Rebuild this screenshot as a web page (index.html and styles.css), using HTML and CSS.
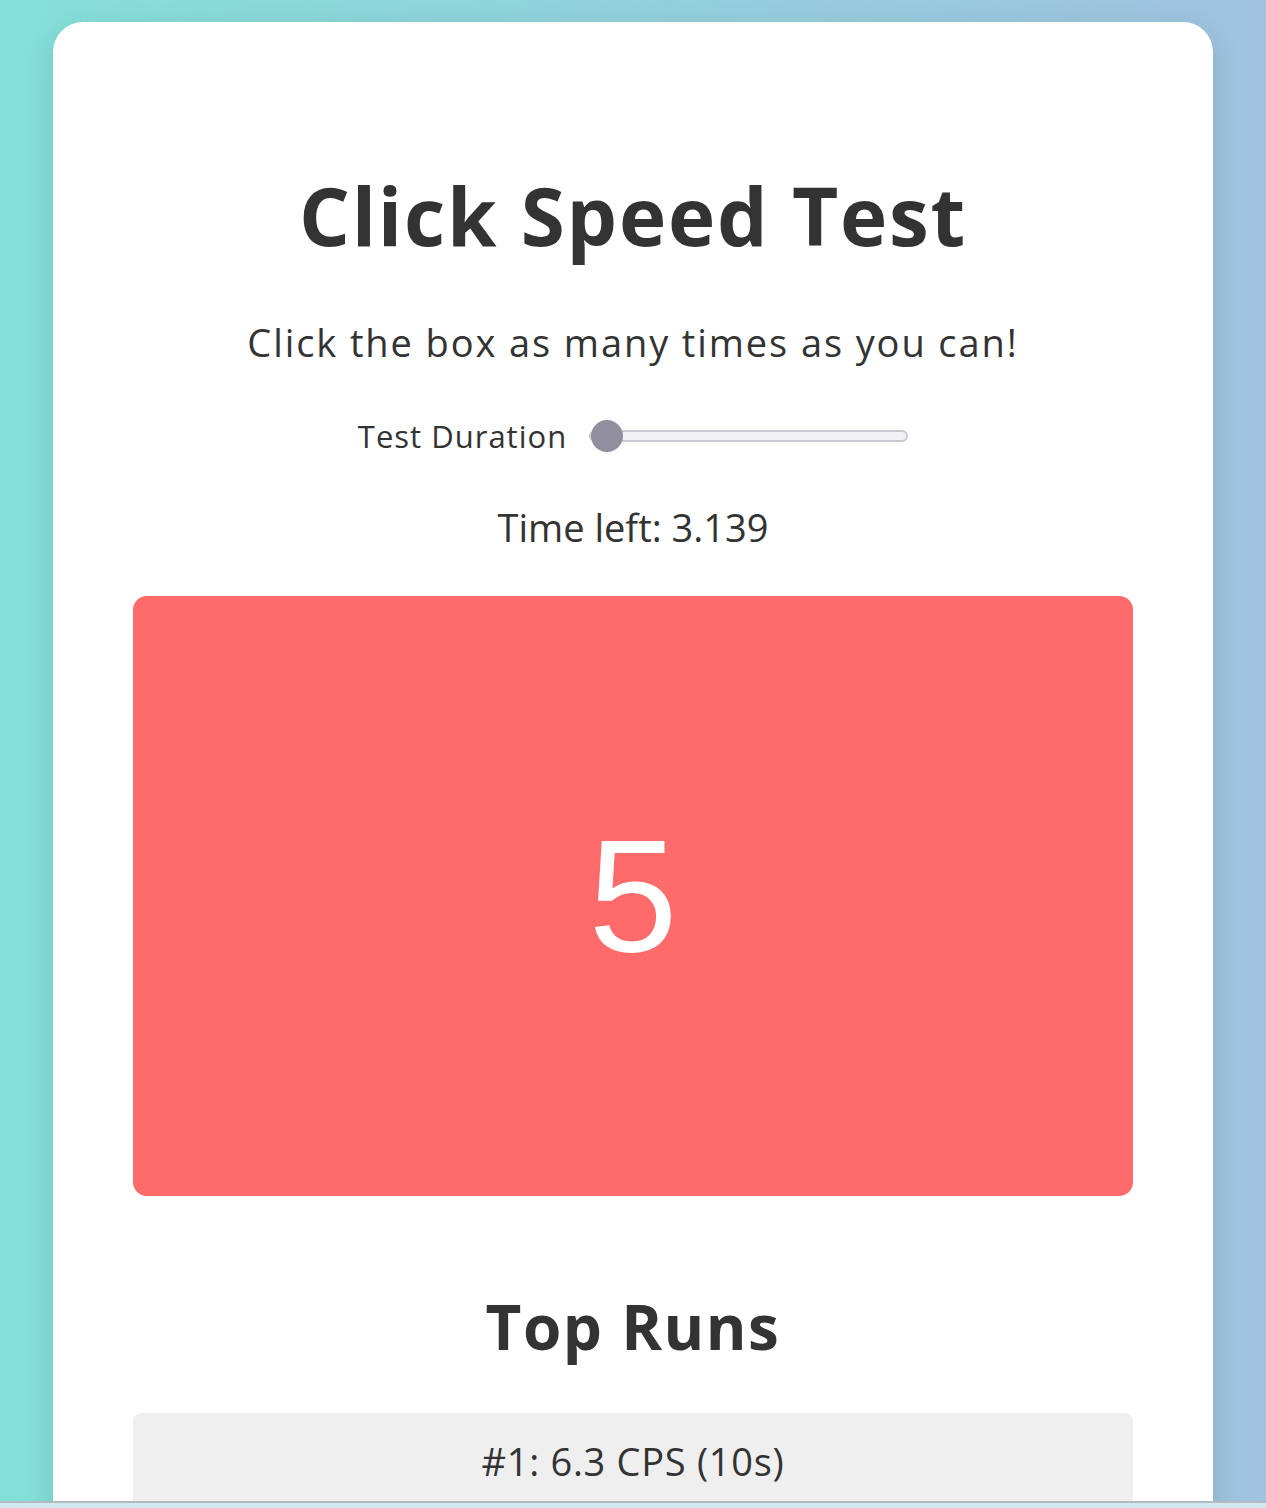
FILE: index.html
```html
<!DOCTYPE html>
<html lang="en">
<head>
<meta charset="utf-8">
<title>Click Speed Test</title>
<link rel="stylesheet" href="styles.css">
</head>
<body>
<main class="card">
  <h1 class="title">Click Speed Test</h1>
  <p class="subtitle">Click the box as many times as you can!</p>
  <div class="duration">
    <label class="duration-label" for="dur">Test Duration</label>
    <input class="duration-range" id="dur" type="range" min="1" max="60" value="1">
  </div>
  <p class="timer">Time left: 3.139</p>
  <div class="click-box"><span class="count">5</span></div>
  <h2 class="runs-title">Top Runs</h2>
  <ul class="runs">
    <li class="run">#1: 6.3 CPS (10s)</li>
  </ul>
</main>
<div class="bottom-strip"></div>
</body>
</html>
```
FILE: styles.css
```css
html, body {
  margin: 0;
  padding: 0;
}
body {
  height: 1508px;
  background: linear-gradient(90deg, #84dfd9 0%, #a0c2df 100%);
  font-family: "Open Sans", "Noto Sans", sans-serif;
  color: #333333;
  overflow: hidden;
}
.card {
  width: 1160px;
  box-sizing: border-box;
  margin: 22px auto 0;
  padding: 148px 80px 40px;
  background: #ffffff;
  border-radius: 30px;
  box-shadow: 0 10px 30px rgba(0, 0, 0, 0.12);
  text-align: center;
}
.title {
  margin: 0;
  font-size: 80px;
  line-height: 90px;
  font-weight: 700;
  letter-spacing: 1.75px;
}
.subtitle {
  margin: 58px 0 0;
  font-size: 38px;
  line-height: 48px;
  font-weight: 400;
  letter-spacing: 1.9px;
}
.duration {
  margin-top: 50px;
  display: flex;
  justify-content: center;
  align-items: center;
  gap: 22px;
  height: 40px;
}
.duration-label {
  font-size: 31px;
  line-height: 40px;
  letter-spacing: 1px;
}
.duration-range {
  -webkit-appearance: none;
  appearance: none;
  width: 319px;
  height: 32px;
  margin: 0;
  background: transparent;
}
.duration-range::-webkit-slider-runnable-track {
  height: 12px;
  box-sizing: border-box;
  background: #f2f2f5;
  border: 2px solid #c9c9d1;
  border-radius: 6px;
}
.duration-range::-webkit-slider-thumb {
  -webkit-appearance: none;
  appearance: none;
  width: 32px;
  height: 32px;
  margin-top: -12px;
  border-radius: 50%;
  background: #918f9e;
  border: none;
}
.timer {
  margin: 51px 0 0;
  font-size: 38px;
  line-height: 40px;
}
.click-box {
  margin-top: 49px;
  height: 600px;
  background: #ff6b6b;
  border-radius: 14px;
  display: flex;
  align-items: center;
  justify-content: center;
}
.count {
  font-family: "Liberation Sans", Arial, sans-serif;
  font-size: 160px;
  line-height: 1;
  color: #ffffff;
}
.runs-title {
  margin: 90px 0 0;
  font-size: 62px;
  line-height: 80px;
  font-weight: 700;
  letter-spacing: 1.5px;
}
.runs {
  list-style: none;
  margin: 47px 0 0;
  padding: 0;
}
.run {
  background: #efefef;
  border-radius: 8px;
  padding: 20px 0;
  font-size: 38px;
  line-height: 56px;
  letter-spacing: 0.7px;
}
.bottom-strip {
  position: fixed;
  left: 0;
  right: 0;
  bottom: 0;
  height: 5px;
  border-top: 2px solid #b2bbbf;
  background: #d3e9ef;
}
```
